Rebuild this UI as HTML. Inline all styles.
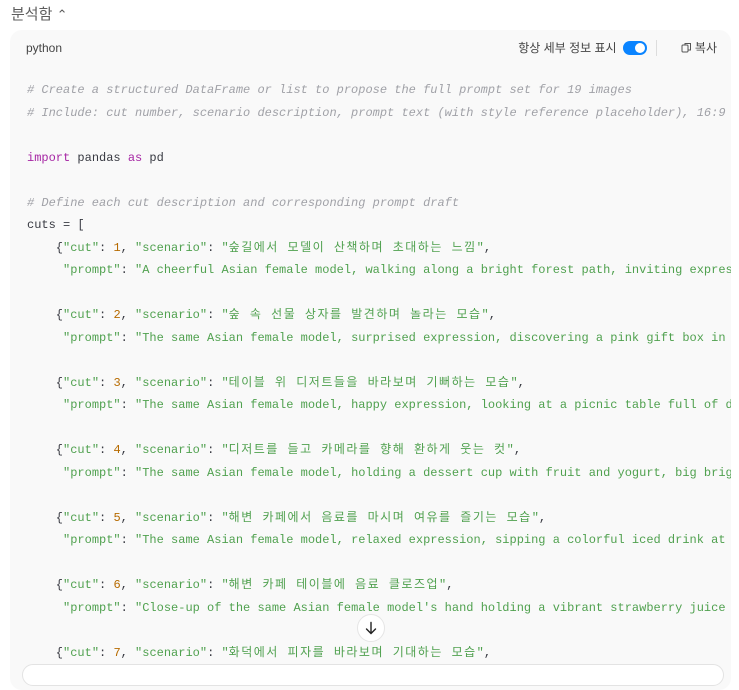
<!DOCTYPE html>
<html><head><meta charset="utf-8"><style>
body{margin:0;background:#fff;width:739px;height:669px;overflow:hidden;position:relative;font-family:"Liberation Sans","Noto Sans CJK KR",sans-serif;}
.hdr{position:absolute;left:11px;top:3px;font-size:15px;color:#5d5d5d;}
.box{position:absolute;left:10px;top:30px;width:721px;height:660px;background:#f9f9f9;border-radius:12px;overflow:hidden;}
.lang{position:absolute;left:16px;top:11px;font-size:12px;color:#444;}
.right{position:absolute;right:14px;top:9px;font-size:12px;color:#444;display:flex;align-items:center;}
.tog{width:24px;height:14px;border-radius:8px;background:#0a84ff;position:relative;margin-left:6px;}
.tog:after{content:"";position:absolute;right:2px;top:2px;width:10px;height:10px;border-radius:50%;background:#fff;}
.div{width:1px;height:16px;background:#ddd;margin:0 24px 0 9px;}
pre{position:absolute;left:17px;top:49px;margin:0;font-family:"Liberation Mono","Noto Sans CJK KR",monospace;font-size:12px;line-height:22.5px;color:#383a42;white-space:pre;}
.c{color:#a0a1a7;font-style:italic}.k{color:#a626a4}.s{color:#50a14f}.n{color:#b76b01}
.h{letter-spacing:1.5px}
.arrow{position:absolute;left:357px;top:614px;width:28px;height:28px;border-radius:50%;background:#fff;border:1px solid #e5e5e5;box-sizing:border-box;display:flex;align-items:center;justify-content:center;}
.bot{position:absolute;left:22px;top:664px;width:700px;height:20px;background:#fff;border:1px solid #e3e3e3;border-radius:14px;}
</style></head><body>
<div class="hdr">분석함 <span style="font-size:13px">⌃</span></div>
<div class="box">
<div class="lang">python</div>
<div class="right">항상 세부 정보 표시<div class="tog"></div><div class="div"></div><svg width="11" height="11" viewBox="0 0 11 11" fill="none" stroke="#555" stroke-width="1"><rect x="1" y="3" width="6" height="7" rx="1"/><path d="M4 3V1.5h5.5V8H7"/></svg>&nbsp;복사</div>
<pre><span class="c"># Create a structured DataFrame or list to propose the full prompt set for 19 images</span>
<span class="c"># Include: cut number, scenario description, prompt text (with style reference placeholder), 16:9</span>

<span class="k">import</span> pandas <span class="k">as</span> pd

<span class="c"># Define each cut description and corresponding prompt draft</span>
cuts = [
    {<span class="s">"cut"</span>: <span class="n">1</span>, <span class="s">"scenario"</span>: <span class="s">"<span class="h">숲길에서 모델이 산책하며 초대하는 느낌</span>"</span>,
     <span class="s">"prompt"</span>: <span class="s">"A cheerful Asian female model, walking along a bright forest path, inviting expression</span>

    {<span class="s">"cut"</span>: <span class="n">2</span>, <span class="s">"scenario"</span>: <span class="s">"<span class="h">숲 속 선물 상자를 발견하며 놀라는 모습</span>"</span>,
     <span class="s">"prompt"</span>: <span class="s">"The same Asian female model, surprised expression, discovering a pink gift box in</span>

    {<span class="s">"cut"</span>: <span class="n">3</span>, <span class="s">"scenario"</span>: <span class="s">"<span class="h">테이블 위 디저트들을 바라보며 기뻐하는 모습</span>"</span>,
     <span class="s">"prompt"</span>: <span class="s">"The same Asian female model, happy expression, looking at a picnic table full of d</span>

    {<span class="s">"cut"</span>: <span class="n">4</span>, <span class="s">"scenario"</span>: <span class="s">"<span class="h">디저트를 들고 카메라를 향해 환하게 웃는 컷</span>"</span>,
     <span class="s">"prompt"</span>: <span class="s">"The same Asian female model, holding a dessert cup with fruit and yogurt, big brig</span>

    {<span class="s">"cut"</span>: <span class="n">5</span>, <span class="s">"scenario"</span>: <span class="s">"<span class="h">해변 카페에서 음료를 마시며 여유를 즐기는 모습</span>"</span>,
     <span class="s">"prompt"</span>: <span class="s">"The same Asian female model, relaxed expression, sipping a colorful iced drink at</span>

    {<span class="s">"cut"</span>: <span class="n">6</span>, <span class="s">"scenario"</span>: <span class="s">"<span class="h">해변 카페 테이블에 음료 클로즈업</span>"</span>,
     <span class="s">"prompt"</span>: <span class="s">"Close-up of the same Asian female model's hand holding a vibrant strawberry juice</span>

    {<span class="s">"cut"</span>: <span class="n">7</span>, <span class="s">"scenario"</span>: <span class="s">"<span class="h">화덕에서 피자를 바라보며 기대하는 모습</span>"</span>,
</pre>
</div>
<div class="arrow"><svg width="14" height="14" viewBox="0 0 14 14" fill="none" stroke="#222" stroke-width="1.4" stroke-linecap="round"><path d="M7 1.5v11M2.5 8l4.5 4.5L11.5 8"/></svg></div>
<div class="bot"></div>
</body></html>
